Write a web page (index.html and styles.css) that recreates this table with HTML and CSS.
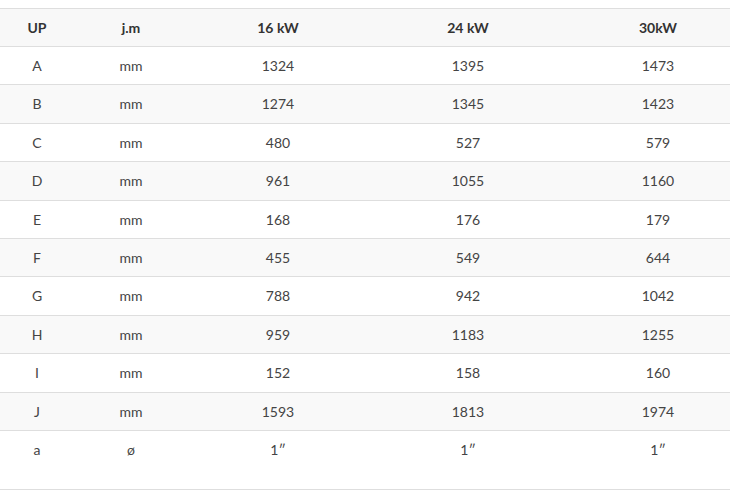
FILE: index.html
```html
<!DOCTYPE html>
<html>
<head>
<meta charset="utf-8">
<link rel="stylesheet" href="styles.css">
</head>
<body>
<div class="wrap">
<table class="spec">
  <colgroup>
    <col class="c1"><col class="c2"><col class="c3"><col class="c4"><col class="c5">
  </colgroup>
  <thead>
    <tr><th>UP</th><th>j.m</th><th>16 kW</th><th>24 kW</th><th>30kW</th></tr>
  </thead>
  <tbody>
    <tr><td>A</td><td>mm</td><td>1324</td><td>1395</td><td>1473</td></tr>
    <tr><td>B</td><td>mm</td><td>1274</td><td>1345</td><td>1423</td></tr>
    <tr><td>C</td><td>mm</td><td>480</td><td>527</td><td>579</td></tr>
    <tr><td>D</td><td>mm</td><td>961</td><td>1055</td><td>1160</td></tr>
    <tr><td>E</td><td>mm</td><td>168</td><td>176</td><td>179</td></tr>
    <tr><td>F</td><td>mm</td><td>455</td><td>549</td><td>644</td></tr>
    <tr><td>G</td><td>mm</td><td>788</td><td>942</td><td>1042</td></tr>
    <tr><td>H</td><td>mm</td><td>959</td><td>1183</td><td>1255</td></tr>
    <tr><td>I</td><td>mm</td><td>152</td><td>158</td><td>160</td></tr>
    <tr><td>J</td><td>mm</td><td>1593</td><td>1813</td><td>1974</td></tr>
    <tr class="last"><td>a</td><td>ø</td><td>1″</td><td>1″</td><td>1″</td></tr>
  </tbody>
</table>
</div>
</body>
</html>
```
FILE: styles.css
```css
html, body {
  margin: 0;
  padding: 0;
  background: #fff;
}
.wrap {
  width: 730px;
  overflow: hidden;
  padding-top: 8px;
}
.spec {
  width: 748px;
  border-collapse: collapse;
  table-layout: fixed;
  font-family: Lato, "Open Sans", sans-serif;
  font-size: 14px;
  color: #444;
}
.c1 { width: 74px; }
.c2 { width: 114px; }
.c3 { width: 180px; }
.c4 { width: 200px; }
.c5 { width: 180px; }
.spec th, .spec td {
  text-align: center;
  vertical-align: top;
  padding: 10px 0 0;
  height: 27.4px;
  border-top: 1px solid #dedede;
  line-height: 18px;
}
.spec th {
  font-weight: bold;
  color: #333;
  background: #f8f8f8;
  height: 27px;
}
.spec tbody tr:nth-child(even) td {
  background: #f9f9f9;
}
.spec tr.last td {
  height: 48px;
  border-bottom: 1px solid #dedede;
}
```
